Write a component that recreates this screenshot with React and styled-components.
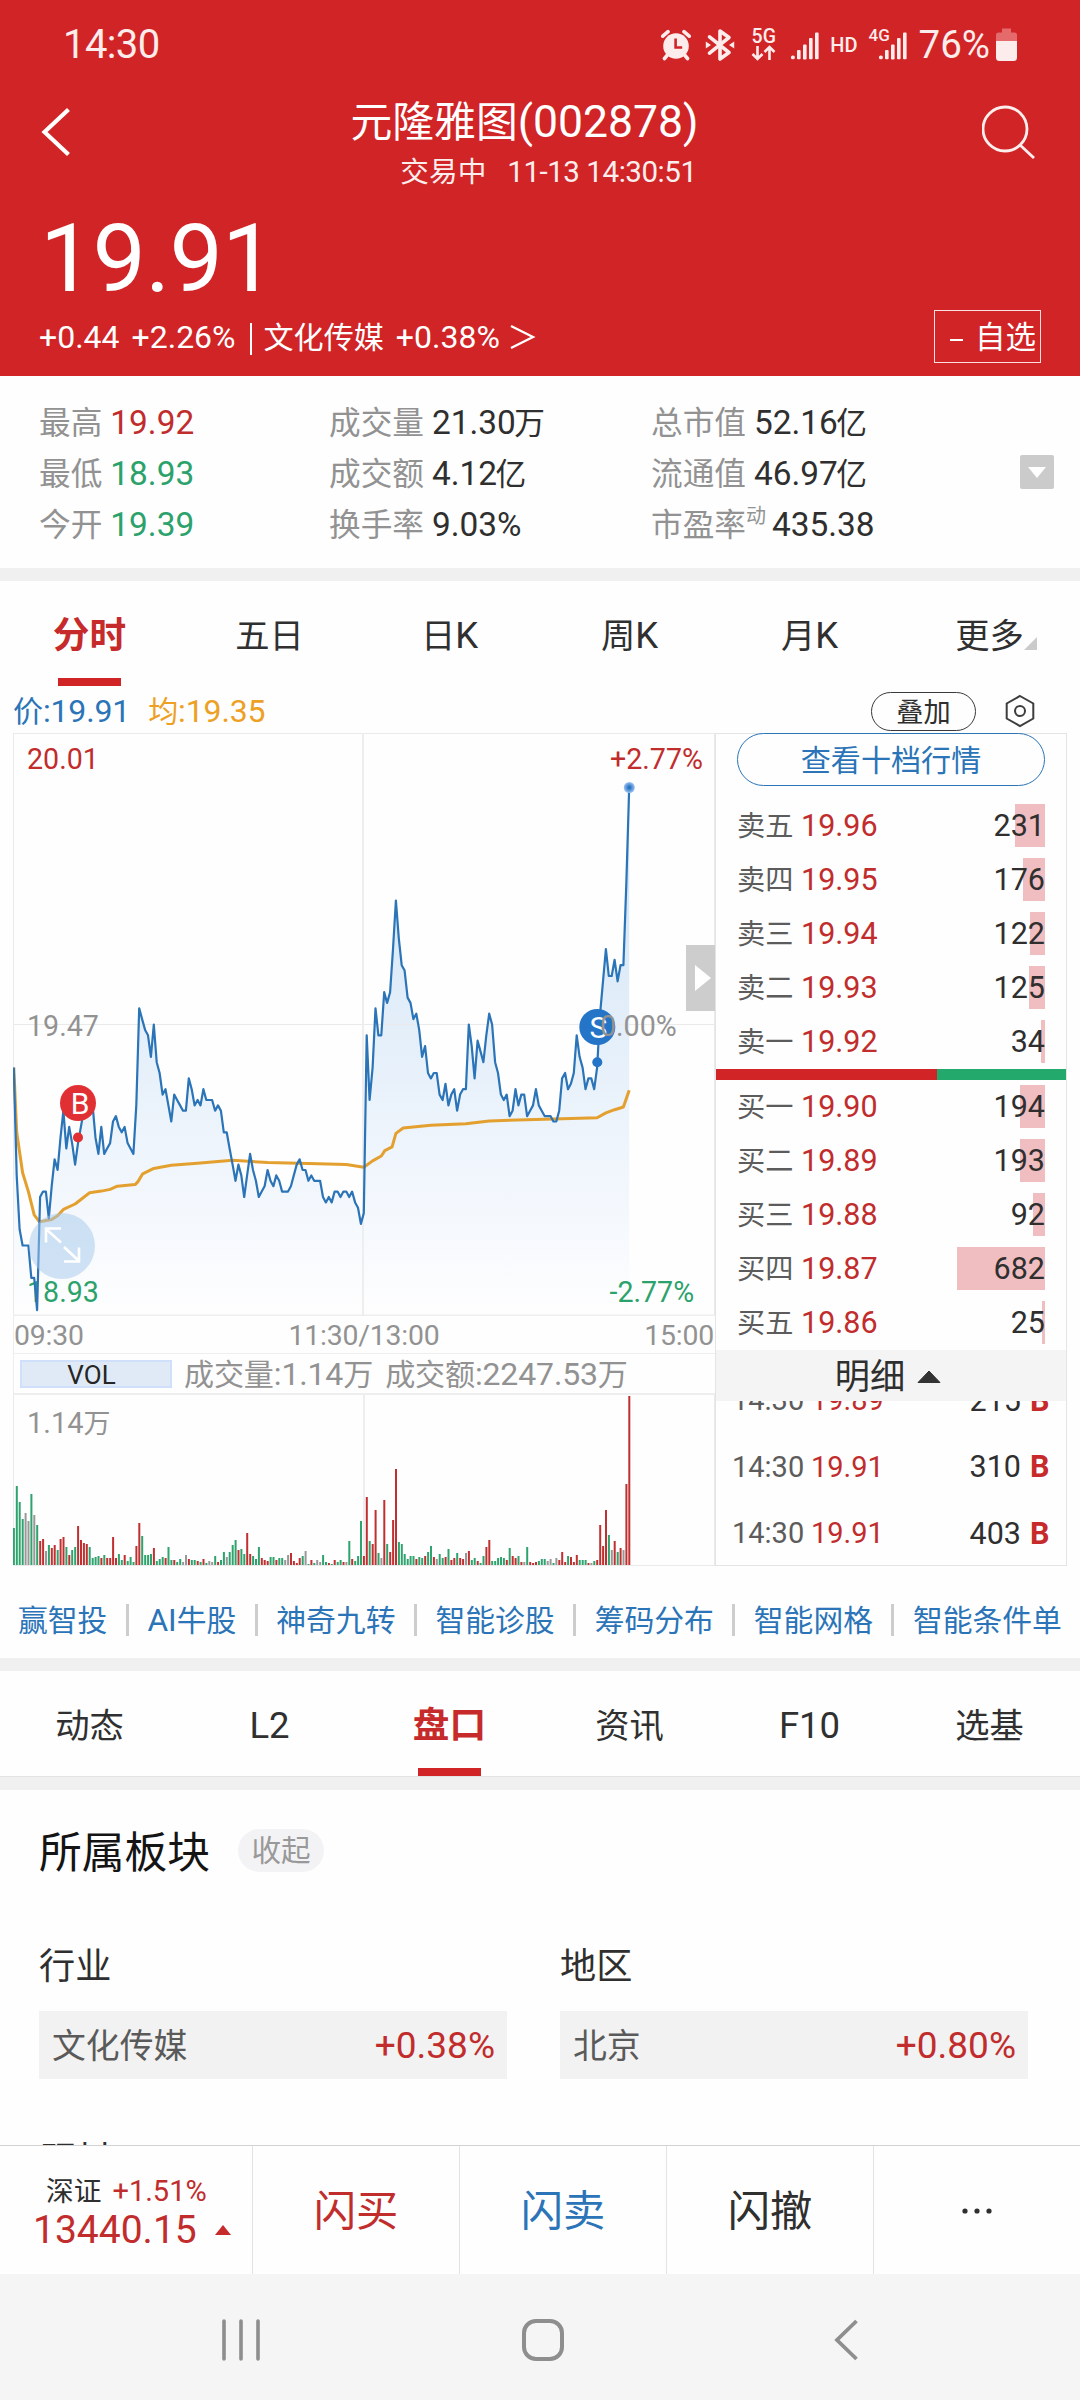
import { Fragment } from "react";
import styled, { createGlobalStyle, css } from "styled-components";

const GlobalStyle = createGlobalStyle`
  * { box-sizing: border-box; }
  body {
    margin: 0;
    background: #fefefe;
    color: #2f2f2f;
    font-family: Roboto, "Noto Sans CJK SC", sans-serif;
  }
  svg { display: block; flex: none; }
`;

const RED = "#c12c2c";
const GREEN = "#2ba26b";
const BLUE = "#2b74b8";
const GREY = "#929292";

const Screen = styled.div`
  width: 1080px;
  height: 2400px;
  overflow: hidden;
  display: flex;
  flex-direction: column;
`;
// chinese glyphs run slightly smaller than the latin digits beside them
const Zh = styled.span`
  font-size: 0.94em;
  line-height: 0;
`;
const Text = styled.span`
  white-space: pre;
  font-size: ${props => props.size}px;
  color: ${props => props.color || "inherit"};
  font-weight: ${props => props.weight || 400};
  letter-spacing: ${props => props.track || 0}px;
`;

//---------------------------------------------------HEADER---------------------------------------------------

const Header = styled.header`
  flex: none;
  height: 376px;
  background: #d12426;
  color: #fff;
`;
const StatusBar = styled.div`
  height: 88px;
  padding: 1px 63px 0 63px;
  display: flex;
  align-items: center;
  justify-content: space-between;
  color: #fdecec;
`;
const StatusIcons = styled.div`
  display: flex;
  align-items: center;
`;
const NavRow = styled.div`
  height: 114px;
  padding: 4px 44px 0 40px;
  display: flex;
  justify-content: space-between;
  align-items: flex-start;
`;
const NavIcon = styled.div`
  padding-top: 13px;
`;
const TitleBlock = styled.div`
  display: flex;
  flex-direction: column;
  align-items: flex-end;
  margin-right: 5px;
`;
const Title = styled.div`
  height: 58px;
  padding-top: 1px;
  display: flex;
  align-items: center;
`;
const SubTitle = styled.div`
  height: 42px;
  padding: 1px 2px 0 0;
  display: flex;
  align-items: center;
  gap: 21px;
  color: #fdeeee;
`;
const BigPrice = styled.div`
  height: 108px;
  line-height: 113px;
  padding-left: 40px;
  font-size: 95px;
  letter-spacing: -0.8px;
`;
const InfoRow = styled.div`
  height: 53px;
  padding: 0 39px 0 39px;
  display: flex;
  align-items: center;
`;
const InfoItem = styled.span`
  margin-right: ${props => props.gap}px;
  font-size: 32px;
  white-space: pre;
`;
const InfoBar = styled.i`
  width: 2px;
  height: 32px;
  margin: 4px 12px 0 0;
  background: #fff;
`;
const WatchButton = styled.div`
  margin-left: auto;
  width: 107px;
  height: 53px;
  border: 1.5px solid #fbdede;
  display: flex;
  align-items: center;
  justify-content: flex-end;
  padding-right: 4px;
  gap: 12px;
`;
const Dash = styled.i`
  width: 13px;
  height: 2px;
  margin-top: 6px;
  background: #fff;
`;

//---------------------------------------------------STATS----------------------------------------------------

const Stats = styled.section`
  flex: none;
  height: 192px;
  padding: 21px 26px 0 39px;
  display: flex;
  justify-content: space-between;
`;
const StatsGrid = styled.div`
  display: grid;
  grid-template-columns: 290px 322px auto;
  grid-auto-rows: 51px;
`;
const Stat = styled.div`
  display: flex;
  align-items: center;
  gap: 8px;
  font-size: 33.7px;
  white-space: nowrap;
`;
const StatLabel = styled.span`
  color: ${GREY};
`;
const StatValue = styled.span`
  font-size: 33.4px;
  color: ${props => props.color || "inherit"};
  ${Zh} {
    font-size: 0.92em;
    margin-left: -1.5px;
  }
`;
const Sup = styled.sup`
  font-size: 20px;
  line-height: 0;
  vertical-align: 13px;
  margin-right: -2px;
`;
const DropButton = styled.div`
  width: 34px;
  height: 34px;
  margin-top: 58px;
  border-radius: 2px;
  background: #cbcbcb;
  display: flex;
  align-items: center;
  justify-content: center;
`;
const Band = styled.div`
  flex: none;
  height: ${props => props.h}px;
  background: #f0f0f0;
  ${props => props.line && css`border-top: 1px solid #e3e3e3;`}
`;

//---------------------------------------------------TABS-----------------------------------------------------

const Tabs = styled.nav`
  flex: none;
  height: 105px;
  display: grid;
  grid-template-columns: repeat(6, 1fr);
`;
const Tab = styled.div`
  display: flex;
  flex-direction: column;
  align-items: center;
  padding: 11px 1px 0 0;
  font-size: ${props => (props.active ? 39 : 36.5)}px;
  font-weight: ${props => (props.active ? 700 : 400)};
  color: ${props => (props.active ? "#c62a2a" : "#303030")};
  &::after {
    content: "";
    width: 63px;
    height: 8px;
    background: ${props => (props.active ? "#d12426" : "transparent")};
  }
`;
const TabLabel = styled.div`
  position: relative;
  height: 86px;
  line-height: 87px;
`;
const Corner = styled.svg`
  position: absolute;
  left: 100%;
  bottom: 28px;
`;

//---------------------------------------------------CHART----------------------------------------------------

const ChartHead = styled.div`
  flex: none;
  height: 47px;
  padding: 3px 45px 0 13px;
  display: flex;
  align-items: center;
  gap: 18px;
`;
const OverlayButton = styled.div`
  margin-left: auto;
  width: 105px;
  height: 39px;
  border: 1.5px solid #3a3a3a;
  border-radius: 20px;
  font-size: 29px;
  line-height: 38px;
  text-align: center;
`;
const ChartArea = styled.section`
  flex: none;
  height: 833px;
  padding-left: 13px;
  display: flex;
`;
const ChartColumn = styled.div`
  width: 702px;
`;
const PriceWrap = styled.div`
  position: relative;
  height: 583px;
`;
const Expand = styled.svg`
  position: absolute;
  left: 16px;
  top: 480px;
`;
const Handle = styled.div`
  position: absolute;
  right: 0;
  top: 212px;
  width: 29px;
  height: 66px;
  padding-left: 4px;
  background: #cdcdcd;
  display: flex;
  align-items: center;
  justify-content: center;
`;
const Axis = styled.div`
  height: 37px;
  line-height: 39px;
  padding-right: 1px;
  display: grid;
  grid-template-columns: 1fr auto 1fr;
  font-size: 28.4px;
  color: ${GREY};
  border-left: 1px solid #ededed;
  span { letter-spacing: -0.2px; }
  span:last-child { text-align: right; }
`;
const VolHead = styled.div`
  height: 42px;
  padding-left: 6px;
  display: flex;
  align-items: center;
  border: 2px solid #eee;
  border-width: 1px 0 2px 1px;
  color: ${GREY};
  font-size: 32px;
`;
const VolTag = styled.div`
  width: 152px;
  height: 28px;
  margin-right: 12px;
  padding-right: 9px;
  border: 2px solid #d1e0fa;
  background: #e0eaf6;
  color: #262626;
  font-size: 26px;
  line-height: 26px;
  text-align: center;
`;
const VolText = styled.span`
  margin-right: 12px;
  padding-top: 1px;
  letter-spacing: -0.15px;
`;
const SvgLabel = styled.text`
  font-family: Roboto, "Noto Sans CJK SC", sans-serif;
  font-size: ${props => props.$size || 28.6}px;
`;

//---------------------------------------------------ORDER BOOK-----------------------------------------------

const Book = styled.aside`
  width: 352px;
  border: 1px solid #e4e4e4;
  display: flex;
  flex-direction: column;
`;
const DepthButton = styled.div`
  flex: none;
  width: 308px;
  height: 53px;
  margin: -1px 0 18px 21px;
  border: 1.5px solid ${BLUE};
  border-radius: 27px;
  color: ${BLUE};
  font-size: 32px;
  line-height: 53px;
  text-align: center;
`;
const Level = styled.div`
  height: 43px;
  margin-bottom: 11px;
  padding: 0 21px 0 21px;
  display: flex;
  align-items: center;
  font-size: 30.5px;
  line-height: 45px;
`;
const LevelName = styled.span`
  width: 64px;
  font-size: 30px;
  color: #5c5c5c;
`;
const LevelVol = styled.span`
  margin-left: auto;
  height: 43px;
  min-width: 88px;
  line-height: 44px;
  text-align: right;
  background: linear-gradient(#f0bdc0, #f0bdc0) right / ${props => props.bar}px 100% no-repeat;
`;
const Balance = styled.div`
  flex: none;
  height: 11px;
  margin: -5px 0 5px;
  background: linear-gradient(90deg, #d02426 221px, #24a96d 221px);
`;
const DetailBar = styled.div`
  flex: none;
  height: 51px;
  margin-top: -5px;
  padding: 2px 6px 0 0;
  background: #f4f4f4;
  display: flex;
  align-items: center;
  justify-content: center;
  gap: 12px;
  font-size: 37.5px;
`;
const Trades = styled.div`
  height: 164px;
  overflow: hidden;
`;
const TradeScroll = styled.div`
  margin-top: -34px;
`;
const Trade = styled.div`
  height: 66.5px;
  padding: 0 16px 0 16px;
  display: flex;
  align-items: center;
  font-size: 30.5px;
`;
const TradeTime = styled.span`
  width: 79px;
  font-size: 29px;
  color: #5c5c5c;
`;
const TradeSide = styled.b`
  width: 20px;
  margin-left: 9px;
  color: #c62a2a;
`;

//---------------------------------------------------LOWER PART-----------------------------------------------

const Links = styled.div`
  flex: none;
  height: 92px;
  padding: 16px 18px 0;
  display: flex;
  align-items: center;
  justify-content: space-between;
  font-size: 31.7px;
  color: ${BLUE};
`;
const LinkSep = styled.i`
  width: 3px;
  height: 32px;
  background: #cdcdcd;
`;
const Sectors = styled.section`
  flex: none;
  height: 355px;
  padding: 0 53px 0 39px;
  overflow: hidden;
`;
const SectorHead = styled.div`
  height: 124px;
  margin-bottom: 5px;
  display: flex;
  align-items: center;
  gap: 28px;
  color: #141414;
`;
const Fold = styled.span`
  width: 86px;
  height: 43px;
  margin-bottom: 3px;
  border-radius: 22px;
  background: #f3f3f5;
  color: #999;
  font-size: 31.5px;
  line-height: 44px;
  text-align: center;
`;
const SectorGrid = styled.div`
  display: grid;
  grid-template-columns: 468px 468px;
  column-gap: 53px;
`;
const SectorTitle = styled.div`
  height: ${props => props.h}px;
  line-height: ${props => props.h + 1}px;
  font-size: 38.5px;
`;
const SectorBox = styled.div`
  height: 68px;
  margin-bottom: 57px;
  padding: 1px 12px 0 13px;
  background: #f2f2f2;
  display: flex;
  align-items: center;
  justify-content: space-between;
  color: #5a5a5a;
`;
const ActionBar = styled.footer`
  flex: none;
  height: 129px;
  border-top: 1px solid #d3d3d3;
  background: #fefefe;
  display: grid;
  grid-template-columns: 253px repeat(3, 207px) 1fr;
`;
const Action = styled.div`
  border-right: ${props => (props.last ? 0 : 1.5)}px solid #e3e3e3;
  padding-top: 3px;
  display: flex;
  align-items: center;
  justify-content: center;
  font-size: 45px;
  color: ${props => props.color};
`;
const IndexCell = styled(Action)`
  flex-direction: column;
  align-items: flex-start;
  padding: 0 0 0 33px;
`;
const IndexLine = styled.div`
  height: 39px;
  padding-left: ${props => props.indent}px;
  display: flex;
  align-items: center;
  gap: ${props => props.gap}px;
`;
const SystemBar = styled.div`
  flex: 1;
  padding: 6px 222px 0 222px;
  background: #f5f5f5;
  display: flex;
  align-items: center;
  justify-content: space-between;
`;
const HomeIcon = styled.svg`
  margin-right: 8px;
`;

//---------------------------------------------------STYLED COMPONENT END-------------------------------------

const stats = [
  ["最高", "19.92", RED], ["成交量", "21.30万"], ["总市值", "52.16亿"],
  ["最低", "18.93", GREEN], ["成交额", "4.12亿"], ["流通值", "46.97亿"],
  ["今开", "19.39", GREEN], ["换手率", "9.03%"], ["市盈率", "435.38", null, "动"],
];
const sells = [
  ["卖五", "19.96", 231, 30], ["卖四", "19.95", 176, 22], ["卖三", "19.94", 122, 15],
  ["卖二", "19.93", 125, 16], ["卖一", "19.92", 34, 4],
];
const buys = [
  ["买一", "19.90", 194, 25], ["买二", "19.89", 193, 25], ["买三", "19.88", 92, 12],
  ["买四", "19.87", 682, 88], ["买五", "19.86", 25, 3],
];
const trades = [["14:30", "19.89", 215], ["14:30", "19.91", 310], ["14:30", "19.91", 403]];
const links = ["赢智投", "AI牛股", "神奇九转", "智能诊股", "筹码分布", "智能网格", "智能条件单"];

// price per minute, in cents away from the previous close (19.47)
const prices = [
  -8, -28, -38, -41, -41, -41, -47, -47, -53, -32, -31, -31, -36, -30, -25, -27, -21, -16, -23, -19,
  -22, -26, -22, -19, -16, -15, -14, -15, -21, -24, -19, -24, -23, -22, -18, -17, -19, -20, -19, -22,
  -23, -24, -15, 3, 1, -1, -2, -6, 0, -7, -9, -13, -12, -15, -18, -13, -14, -15, -16, -16,
  -10, -12, -15, -14, -15, -12, -14, -14, -14, -16, -15, -16, -20, -20, -23, -26, -29, -26, -28, -32,
  -28, -24, -27, -29, -32, -31, -30, -27, -29, -30, -28, -29, -31, -31, -31, -30, -28, -26, -25, -27,
  -27, -29, -28, -29, -29, -29, -32, -33, -32, -33, -31, -31, -32, -31, -31, -32, -31, -33, -34, -37,
  -35, -2, -14, -8, 3, -2, -2, 6, 4, 6, 14, 23, 16, 11, 10, 5, 4, 1, 2, -1,
  -6, -4, -9, -10, -9, -9, -13, -14, -11, -15, -13, -12, -16, -13, -12, -12, 0, -4, -10, -3,
  -5, -7, -2, 2, 0, -7, -9, -13, -14, -13, -17, -16, -12, -15, -13, -13, -17, -16, -15, -12,
  -15, -16, -17, -17, -17, -18, -18, -16, -10, -9, -12, -11, -9, -2, -6, -8, -12, -10, -10, -12,
  -8, 2, 8, 14, 9, 9, 12, 8, 11, 11, 26, 44,
];
// [minute, cents]
const average = [
  [0, -8], [1, -20], [3, -27.5], [5, -31], [7, -35.3], [8.8, -36.6], [13, -36.2], [15, -35.5],
  [17, -34.3], [21, -33.3], [26, -31.2], [30, -30.9], [33, -30.6], [35.5, -30], [41.6, -29.7],
  [42.5, -29.2], [44.2, -27.7], [48, -26.7], [54, -26.1], [64, -25.7], [75, -25.2], [87, -25.6],
  [101, -25.8], [114, -26], [120, -26.5], [123, -25.3], [126, -24.4], [127.2, -23.4],
  [129.7, -22.7], [131, -20.2], [133.5, -19.2], [143, -18.7], [155, -18.4], [163, -17.9],
  [179, -17.6], [188, -17.5], [200, -17.3], [203, -16.4], [206, -15.8], [209, -15.3], [211, -12.2],
];
// volume bar per minute: r = up, g = down, n = flat
const volumes = (
  "g37 g79 g63 g46 n52 n44 g71 n50 g40 r24 r26 n14 g20 r17 r20 g15 r26 r28 g18 r10 " +
  "g15 g18 r39 r25 r22 r21 g18 g7 g8 g9 r7 g10 r7 r7 r28 r7 g11 g5 r10 g4 " +
  "g8 g3 r19 r42 g29 g10 g10 g11 r17 g4 g6 g8 r7 g18 g5 r5 g3 g6 n3 n10 " +
  "r6 g5 g5 r4 g3 r6 g2 n4 n3 g9 r3 g5 g13 n8 g13 g20 g25 r15 g16 g11 " +
  "r32 r11 g9 g6 g18 r7 r5 r4 g8 g8 r5 g7 g7 n5 n10 r12 r4 r2 r7 g9 " +
  "n14 g1 r5 g2 n5 n3 g10 g3 r2 g1 r5 g3 g5 r3 n3 g24 r6 g4 g9 g44 " +
  "r9 r68 g24 r21 r55 g12 n7 r65 g21 r13 r45 r96 g23 g21 g11 g6 g9 g9 r6 g8 " +
  "g7 r9 g13 g19 r8 n6 g11 g7 r8 g16 r5 r7 g12 r7 r6 n12 r14 g5 g7 r4 " +
  "g2 g9 r18 r25 g4 g4 g7 g8 g7 r5 g17 r9 r7 g9 r3 n3 g18 r3 r2 r3 " +
  "g4 g6 g6 n4 n6 g2 n7 r5 r13 r3 g9 r8 r3 r10 g5 g5 g5 r2 n2 g4 " +
  "r5 r40 r19 r55 g30 n15 r24 g13 r17 n15 r81 r169"
).split(" ");
const volColors = { r: "#c03030", g: "#2fa36e", n: "#989898" };

const minuteX = m => 0.8 + m * 2.9167;
const centY = c => 291.5 - c * 5.39;
const points = list => list.map(([m, c]) => `${minuteX(m).toFixed(1)},${centY(c).toFixed(1)}`).join(" ");

const Mixed = ({ children }) =>
  children.split(/([\u4e00-\u9fff]+)/).map((part, i) => (i % 2 ? <Zh key={i}>{part}</Zh> : part));

const Signal = () => (
  <svg width="28" height="28" viewBox="0 0 28 28" fill="#fdecec">
    <rect x="0" y="23.5" width="3.8" height="3.8" rx="1.6" />
    <rect x="6" y="18" width="3.6" height="9.3" rx="1" />
    <rect x="12" y="12.4" width="3.6" height="15" rx="1" />
    <rect x="18" y="6" width="3.6" height="21.3" rx="1" />
    <rect x="24" y="0.5" width="3.6" height="26.8" rx="1" />
  </svg>
);
const SignalBox = styled.div`
  position: relative;
  padding-top: 3px;
  margin-left: ${props => props.left}px;
`;
const NetTag = styled.span`
  position: absolute;
  left: -10px;
  top: -4px;
  font-size: 17px;
  font-weight: 500;
  line-height: 20px;
`;
const Net = styled.div`
  width: 25px;
  margin-left: 16px;
  display: flex;
  flex-direction: column;
  align-items: center;
  font-size: 19.5px;
  font-weight: 500;
  line-height: 17px;
`;
const Hd = styled.span`
  margin-left: 11px;
  font-size: 20px;
  font-weight: 500;
`;
const Percent = styled.span`
  margin: 0 6px 0 12px;
  font-size: 38.5px;
`;
const Bluetooth = styled.svg`
  margin-left: 14px;
`;

const Status = () => (
  <StatusBar>
    <Text size="40" track="-0.6">14:30</Text>
    <StatusIcons>
      <svg width="30" height="32" viewBox="0 0 30 32">
        <circle cx="15" cy="17" r="12.8" fill="#fdecec" />
        <path d="M1.8 7.2L7 2.6M28.2 7.2L23 2.6M6 26.5L3.5 29.5M24 26.5l2.5 3" stroke="#fdecec" strokeWidth="3.6" strokeLinecap="round" />
        <path d="M14.6 9.5v9h6.6" fill="none" stroke="#d12426" strokeWidth="2.6" />
      </svg>
      <Bluetooth width="30" height="34" viewBox="0 0 30 34">
        <path d="M4.5 8.8L24 24.5 15 31V3l9 6.5L4.5 25.2" fill="none" stroke="#fdecec" strokeWidth="3.6" strokeLinecap="round" strokeLinejoin="round" />
        <path d="M0.8 13.5L6 17 0.8 20.5zM29.2 13.5L24 17l5.200 3.500z" fill="#fdecec" />
      </Bluetooth>
      <Net>
        5G
        <svg width="25" height="16" viewBox="0 0 25 16" fill="none" stroke="#fdecec" strokeWidth="2.6">
          <path d="M6.5 1v12.5M1.5 9l5 5 5-5M18.5 15V2.5M13.5 7l5-5 5 5" />
        </svg>
      </Net>
      <SignalBox left={15}><Signal /></SignalBox>
      <Hd>HD</Hd>
      <SignalBox left={21}><NetTag>4G</NetTag><Signal /></SignalBox>
      <Percent>76%</Percent>
      <svg width="21" height="34" viewBox="0 0 21 34">
        <path d="M6 0.5h9v4h3.5Q21 4.500 21 7v6H0V7Q0 4.500 2.500 4.500H6z" fill="#e46a6c" />
        <path d="M0 13h21v16.500Q21 33 17.500 33h-14Q0 33 0 29.500z" fill="#fdecec" />
      </svg>
    </StatusIcons>
  </StatusBar>
);

const PriceChart = () => {
  const line = points(prices.map((c, m) => [m, c]));
  return (
    <svg width="702" height="583" viewBox="0 0 702 583">
      <defs>
        <linearGradient id="area" gradientUnits="userSpaceOnUse" x1="0" y1="60" x2="0" y2="583">
          <stop offset="0" stopColor="#cfe2f4" />
          <stop offset="0.5" stopColor="#e6f0fa" />
          <stop offset="0.8" stopColor="#f4f8fd" />
          <stop offset="1" stopColor="#fefefe" />
        </linearGradient>
        <radialGradient id="glow">
          <stop offset="0.2" stopColor="#2b74c4" />
          <stop offset="1" stopColor="#9cc4f2" />
        </radialGradient>
      </defs>
      <polygon points={`0.8,583 ${line} ${minuteX(211).toFixed(1)},583`} fill="url(#area)" />
      <path d="M0 0.500H702M0.500 0V583M0 291.500H702M701.500 0V583" stroke="#eaeaea" fill="none" />
      <path d="M350 0V583M0 582.500H702" stroke="#eeeeee" strokeWidth="2" fill="none" />
      <SvgLabel x="14" y="36" fill={RED}>20.01</SvgLabel>
      <SvgLabel x="597" y="36" fill={RED}>+2.77%</SvgLabel>
      <SvgLabel x="14" y="303" fill={GREY}>19.47</SvgLabel>
      <SvgLabel x="14" y="568.500" fill={GREEN}>18.93</SvgLabel>
      <SvgLabel x="596.500" y="568.500" fill={GREEN}>-2.77%</SvgLabel>
      <polyline points={points(average)} fill="none" stroke="#e3a02f" strokeWidth="3" strokeLinejoin="round" />
      <polyline points={line} fill="none" stroke={BLUE} strokeWidth="2.200" strokeLinejoin="round" />
      <path d="M65 387v13" stroke="#fff" strokeWidth="2" />
      <circle cx="65" cy="370" r="18" fill="#e13033" />
      <circle cx="65" cy="404.500" r="5" fill="#e13033" />
      <SvgLabel x="67" y="380.500" $size="30" textAnchor="middle" fill="#fff">B</SvgLabel>
      <circle cx="584.300" cy="294" r="18" fill="#2474c8" />
      <circle cx="584.300" cy="329.300" r="5" fill="#2474c8" />
      <SvgLabel x="585.500" y="304.500" $size="30" textAnchor="middle" fill="#fff">S</SvgLabel>
      <SvgLabel x="587" y="303" fill={GREY}>0.00%</SvgLabel>
      <circle cx="616.300" cy="54.500" r="5.500" fill="url(#glow)" />
    </svg>
  );
};

const VolumeChart = () => (
  <svg width="702" height="171" viewBox="0 0 702 171">
    <path d="M0.500 0V170M701.500 0V170M0 170.500H702" stroke="#eaeaea" />
    <path d="M351 0V170" stroke="#eeeeee" strokeWidth="2" />
    <SvgLabel x="14" y="38" $size="29" fill={GREY}>
      1.14<tspan fontSize="27">万</tspan>
    </SvgLabel>
    {volumes.map((bar, m) => {
      const h = Number(bar.slice(1));
      return <rect key={m} x={(minuteX(m) - 0.9).toFixed(1)} y={170 - h} width="2" height={h} fill={volColors[bar[0]]} />;
    })}
  </svg>
);

const Levels = ({ rows }) =>
  rows.map(([name, price, volume, bar]) => (
    <Level key={name}>
      <LevelName><Mixed>{name}</Mixed></LevelName>
      <Text size="30.5" color={RED}>{price}</Text>
      <LevelVol bar={bar}>{volume}</LevelVol>
    </Level>
  ));

const TabBar = ({ items, active, more }) => (
  <Tabs>
    {items.map(item => (
      <Tab key={item} active={item === active}>
        <TabLabel>
          <Mixed>{item}</Mixed>
          {item === more ? <Corner width="13" height="13" viewBox="0 0 13 13"><path d="M13 0v13H0z" fill="#cbcbcb" /></Corner> : null}
        </TabLabel>
      </Tab>
    ))}
  </Tabs>
);

const App = () => {
  return <Screen>
    <GlobalStyle />
    <Header>
      <Status />
      <NavRow>
        <NavIcon>
          <svg width="32" height="54" viewBox="0 0 32 54">
            <path d="M28.500 4.500L4.500 27l24 22.500" fill="none" stroke="#fff" strokeWidth="4.200" />
          </svg>
        </NavIcon>
        <TitleBlock>
          <Title><Text size="44.500"><Mixed>元隆雅图(002878)</Mixed></Text></Title>
          <SubTitle>
            <Text size="30.500"><Mixed>交易中</Mixed></Text>
            <Text size="29.500" track="-0.450">11-13 14:30:51</Text>
          </SubTitle>
        </TitleBlock>
        <NavIcon>
          <svg width="54" height="54" viewBox="0 0 54 54" fill="none" stroke="#fdeeee" strokeWidth="2.800">
            <circle cx="23" cy="24" r="22" />
            <path d="M38 40l14 13" />
          </svg>
        </NavIcon>
      </NavRow>
      <BigPrice>19.91</BigPrice>
      <InfoRow>
        <InfoItem gap={12}>+0.44</InfoItem>
        <InfoItem gap={14}>+2.26%</InfoItem>
        <InfoBar />
        <InfoItem gap={12}><Mixed>文化传媒</Mixed></InfoItem>
        <InfoItem gap={10}>+0.38%</InfoItem>
        <svg width="26" height="26" viewBox="0 0 26 26">
          <path d="M1 2l22 11L1 24" fill="none" stroke="#fff" strokeWidth="2.300" />
        </svg>
        <WatchButton>
          <Dash />
          <Text size="32.500"><Mixed>自选</Mixed></Text>
        </WatchButton>
      </InfoRow>
    </Header>

    <Stats>
      <StatsGrid>
        {stats.map(([label, value, color, sup]) => (
          <Stat key={label}>
            <StatLabel>
              <Mixed>{label}</Mixed>
              {sup ? <Sup>{sup}</Sup> : null}
            </StatLabel>
            <StatValue color={color}><Mixed>{value}</Mixed></StatValue>
          </Stat>
        ))}
      </StatsGrid>
      <DropButton>
        <svg width="18" height="11" viewBox="0 0 18 11"><path d="M0 0h18L9 11z" fill="#fff" /></svg>
      </DropButton>
    </Stats>
    <Band h={13} />

    <TabBar items={["分时", "五日", "日K", "周K", "月K", "更多"]} active="分时" more="更多" />
    <ChartHead>
      <Text size="32" track="-0.150" color={BLUE}><Mixed>价:19.91</Mixed></Text>
      <Text size="32" track="-0.150" color="#eda024"><Mixed>均:19.35</Mixed></Text>
      <OverlayButton><Mixed>叠加</Mixed></OverlayButton>
      <svg width="41" height="34" viewBox="-11 0 41 34" fill="none" stroke="#3d3d3d" strokeWidth="2">
        <path d="M15 2l13.300 7.500v15L15 32 1.700 24.500v-15z" />
        <circle cx="15" cy="17" r="5" />
      </svg>
    </ChartHead>

    <ChartArea>
      <ChartColumn>
        <PriceWrap>
          <PriceChart />
          <Expand width="66" height="66" viewBox="0 0 66 66" fill="none" stroke="#fff" strokeWidth="2.600">
            <circle cx="33" cy="33" r="33" fill="#a4c8ec" fillOpacity="0.5" stroke="none" />
            <path d="M32 29.500L17 16M17 29.500V15.500h15M35 34l15 14M50 34.500v14H35" />
          </Expand>
          <Handle>
            <svg width="16" height="26" viewBox="0 0 16 26"><path d="M0 0l16 13L0 26z" fill="#fff" /></svg>
          </Handle>
        </PriceWrap>
        <Axis>
          <span>09:30</span>
          <span>11:30/13:00</span>
          <span>15:00</span>
        </Axis>
        <VolHead>
          <VolTag>VOL</VolTag>
          <VolText><Mixed>成交量:1.14万</Mixed></VolText>
          <VolText><Mixed>成交额:2247.53万</Mixed></VolText>
        </VolHead>
        <VolumeChart />
      </ChartColumn>

      <Book>
        <DepthButton><Mixed>查看十档行情</Mixed></DepthButton>
        <Levels rows={sells} />
        <Balance />
        <Levels rows={buys} />
        <DetailBar>
          <Mixed>明细</Mixed>
          <svg width="24" height="14" viewBox="0 0 24 14"><path d="M12 1l11 11.500H1z" fill="#333" stroke="#333" strokeLinejoin="round" /></svg>
        </DetailBar>
        <Trades>
          <TradeScroll>
            {trades.map(([time, price, volume], i) => (
              <Trade key={i}>
                <TradeTime>{time}</TradeTime>
                <Text size="29" color={RED}>{price}</Text>
                <LevelVol bar={0}>{volume}</LevelVol>
                <TradeSide>B</TradeSide>
              </Trade>
            ))}
          </TradeScroll>
        </Trades>
      </Book>
    </ChartArea>

    <Links>
      {links.map((link, i) => (
        <Fragment key={link}>
          {i ? <LinkSep /> : null}
          <span><Mixed>{link}</Mixed></span>
        </Fragment>
      ))}
    </Links>
    <Band h={13} />

    <TabBar items={["动态", "L2", "盘口", "资讯", "F10", "选基"]} active="盘口" />
    <Band h={14} line />

    <Sectors>
      <SectorHead>
        <Text size="45.500"><Mixed>所属板块</Mixed></Text>
        <Fold><Mixed>收起</Mixed></Fold>
      </SectorHead>
      <SectorGrid>
        <SectorTitle h={92}><Mixed>行业</Mixed></SectorTitle>
        <SectorTitle h={92}><Mixed>地区</Mixed></SectorTitle>
        <SectorBox><Text size="36"><Mixed>文化传媒</Mixed></Text><Text size="37" color={RED}>+0.38%</Text></SectorBox>
        <SectorBox><Text size="36"><Mixed>北京</Mixed></Text><Text size="37" color={RED}>+0.80%</Text></SectorBox>
        <SectorTitle h={46}><Mixed>题材</Mixed></SectorTitle>
      </SectorGrid>
    </Sectors>

    <ActionBar>
      <IndexCell>
        <IndexLine indent={13} gap={11}>
          <Text size="29.500"><Mixed>深证</Mixed></Text>
          <Text size="29" color={RED}>+1.51%</Text>
        </IndexLine>
        <IndexLine indent={0} gap={18}>
          <Text size="39" color={RED}>13440.15</Text>
          <svg width="16" height="10" viewBox="0 0 16 10"><path d="M8 0l8 10H0z" fill="#c62a2a" /></svg>
        </IndexLine>
      </IndexCell>
      <Action color={RED}><Mixed>闪买</Mixed></Action>
      <Action color={BLUE}><Mixed>闪卖</Mixed></Action>
      <Action color="#2f2f2f"><Mixed>闪撤</Mixed></Action>
      <Action last>
        <svg width="30" height="8" viewBox="0 0 30 8" fill="#2f2f2f">
          <circle cx="3" cy="3" r="2.600" /><circle cx="15" cy="3" r="2.600" /><circle cx="27" cy="3" r="2.600" />
        </svg>
      </Action>
    </ActionBar>
    <SystemBar>
      <svg width="38" height="42" viewBox="0 0 38 42" stroke="#8e8e8e" strokeWidth="3.600" strokeLinecap="round">
        <path d="M2 2v38M19 2v38M36 2v38" />
      </svg>
      <HomeIcon width="42" height="42" viewBox="0 0 42 42" fill="none" stroke="#8e8e8e" strokeWidth="4">
        <rect x="2" y="2" width="38" height="38" rx="12" />
      </HomeIcon>
      <svg width="24" height="42" viewBox="0 0 24 42" fill="none" stroke="#8e8e8e" strokeWidth="3.800">
        <path d="M22.500 2L3 21l19.500 19" />
      </svg>
    </SystemBar>
  </Screen>
}

export default App;
